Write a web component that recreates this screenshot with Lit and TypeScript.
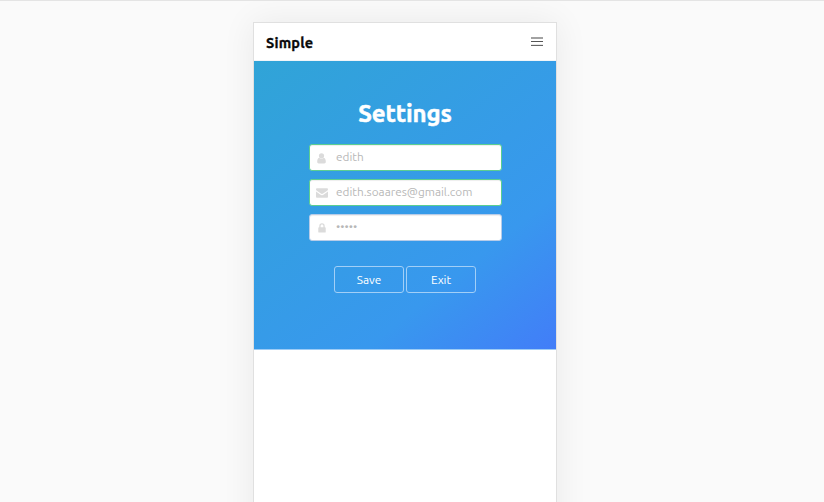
import { LitElement, html, css, svg } from "lit";
import { customElement } from "lit/decorators.js";

const userIcon = svg`<svg width="9" height="11" viewBox="0 0 9 11"><circle cx="4.5" cy="2.8" r="2.6"/><path d="M2.2 4.700C.7 5 .2 6.800.2 8.800.2 9.800.8 10.400 1.700 10.400h5.600c.9 0 1.500-.6 1.500-1.600 0-2-.5-3.800-2-4.100C5.600 6.200 3.400 6.200 2.200 4.700Z"/></svg>`;
const mailIcon = svg`<svg width="12" height="10" viewBox="0 0 12 10"><path d="M0 1.300C0 .6.5.2 1.100.2h9.800c.6 0 1.100.4 1.100 1.100 0 .8-.6 1.400-1.200 1.800L7.100 5.600c-.4.3-.7.500-1.100.5s-.7-.2-1.100-.5L1.200 3.100C.6 2.700 0 2.100 0 1.300Z"/><path d="M0 3.500c.2.200.5.400.7.600l3.500 2.400c.6.400 1.100.7 1.800.7s1.200-.3 1.800-.7l3.500-2.400c.2-.2.500-.4.700-.6v5.200c0 .6-.5 1.100-1.100 1.100H1.100C.5 9.800 0 9.300 0 8.700Z"/></svg>`;
const lockIcon = svg`<svg width="8" height="10" viewBox="0 0 8 10"><path fill-rule="evenodd" d="M1.300 4.200V2.900a2.700 2.700 0 0 1 5.400 0v1.300h.3c.4 0 .7.3.7.700v4c0 .4-.3.700-.7.700H1c-.4 0-.7-.3-.7-.7v-4c0-.4.300-.7.700-.7Zm1.300 0h2.800V2.900a1.400 1.400 0 0 0-2.800 0Z"/></svg>`;

@customElement("app-root")
export class AppRoot extends LitElement {
  static styles = css`
    :host {
      display: block;
      height: 100vh;
      overflow: hidden;
      box-sizing: border-box;
      border-top: 1px solid #e4e4e4;
      background: #fafafa;
      font-family: Ubuntu, "Noto Sans", sans-serif;
    }
    * { box-sizing: border-box; }
    .phone {
      width: 304px;
      height: 520px;
      margin: 21px 0 0 253px;
      border: 1px solid #e0e0e0;
      background: #fff;
      box-shadow: 0 0 32px rgba(0, 0, 0, 0.07);
    }
    .bar {
      height: 38px;
      display: flex;
      align-items: center;
      justify-content: space-between;
      padding: 0 13px 0 12px;
      border-bottom: 1px solid #f1f5f8;
    }
    .brand {
      font-size: 14.5px;
      font-weight: 700;
      line-height: 20px;
      letter-spacing: 0.2px;
      color: #0a0a0a;
      -webkit-text-stroke: 0.3px currentColor;
      padding-top: 2px;
    }
    .menu { display: block; }
    .hero {
      height: 289px;
      display: flex;
      flex-direction: column;
      align-items: center;
      padding-top: 36px;
      border-bottom: 1px solid #9dccf6;
      background: linear-gradient(141deg, #30a4d7 0%, #3898ee 71%, #427df8 100%);
    }
    .title {
      margin: 0;
      height: 47px;
      line-height: 34px;
      font-size: 24px;
      font-weight: 700;
      letter-spacing: -0.1px;
      -webkit-text-stroke: 0.5px currentColor;
      color: #fff;
    }
    .fields { display: flex; flex-direction: column; gap: 8px; padding-left: 1px; }
    .field {
      width: 193px;
      height: 27px;
      display: flex;
      align-items: center;
      border: 1px solid #b7cce8;
      border-radius: 3px;
      background: #fff;
      box-shadow: inset 0 1px 1px rgba(10, 10, 10, 0.07);
      color: #b8b8b8;
      font-size: 11.8px;
      line-height: 18px;
    }
    .valid { border-color: #5bce91; }
    .icon {
      width: 26px;
      display: flex;
      justify-content: center;
      padding: 1px 3px 0 0;
      fill: #dbdbdb;
    }
    .value { white-space: nowrap; padding-bottom: 1px; }
    .actions { display: flex; gap: 2px; margin-top: 25px; }
    .button {
      width: 70px;
      height: 27px;
      padding: 0;
      border: 1px solid #a2cff7;
      border-radius: 3px;
      background: transparent;
      font: inherit;
      font-size: 11.8px;
      color: #fff;
    }
  `;

  render() {
    return html`
      <main class="phone">
        <header class="bar">
          <span class="brand">Simple</span>
          <svg class="menu" width="12" height="11" viewBox="0 0 12 11">
            <rect y="1" width="12" height="2" fill="#a2a2a2" />
            <rect y="5" width="12" height="1" fill="#555" />
            <rect y="8" width="12" height="1" fill="#e8e8e8" />
            <rect y="9" width="12" height="1" fill="#666" />
          </svg>
        </header>
        <section class="hero">
          <h1 class="title">Settings</h1>
          <div class="fields">
            <div class="field valid"><span class="icon">${userIcon}</span><span class="value">edith</span></div>
            <div class="field valid"><span class="icon">${mailIcon}</span><span class="value">edith.soaares@gmail.com</span></div>
            <div class="field"><span class="icon">${lockIcon}</span><span class="value">•••••</span></div>
          </div>
          <div class="actions">
            <button class="button">Save</button>
            <button class="button">Exit</button>
          </div>
        </section>
      </main>
    `;
  }
}
